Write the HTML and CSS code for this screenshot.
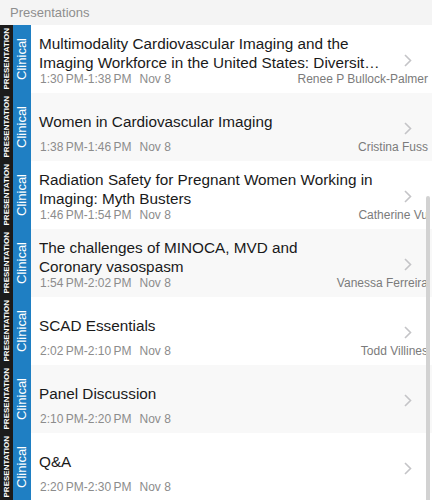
FILE: index.html
```html
<!DOCTYPE html>
<html>
<head>
<meta charset="utf-8">
<link rel="stylesheet" href="styles.css">
</head>
<body>
<div class="screen">
  <div class="section-header">Presentations</div>
  <ul class="list">
    <li class="row">
      <div class="tag-type"><span>PRESENTATION</span></div>
      <div class="tag-track"><span>Clinical</span></div>
      <div class="content">
        <div class="title">Multimodality Cardiovascular Imaging and the Imaging Workforce in the United States: Diversit…</div>
        <svg class="chev" width="8" height="13" viewBox="0 0 8 13"><path d="M1 1l5.5 5.5L1 12" fill="none" stroke="#c4c4c7" stroke-width="1.6"/></svg>
        <div class="meta"><span class="time">1:30&#8201;PM-1:38&#8201;PM<span class="date">Nov 8</span></span><span class="author">Renee P Bullock-Palmer</span></div>
      </div>
    </li>
    <li class="row alt">
      <div class="tag-type"><span>PRESENTATION</span></div>
      <div class="tag-track"><span>Clinical</span></div>
      <div class="content">
        <div class="title">Women in Cardiovascular Imaging</div>
        <svg class="chev" width="8" height="13" viewBox="0 0 8 13"><path d="M1 1l5.5 5.5L1 12" fill="none" stroke="#c4c4c7" stroke-width="1.6"/></svg>
        <div class="meta"><span class="time">1:38&#8201;PM-1:46&#8201;PM<span class="date">Nov 8</span></span><span class="author">Cristina Fuss</span></div>
      </div>
    </li>
    <li class="row">
      <div class="tag-type"><span>PRESENTATION</span></div>
      <div class="tag-track"><span>Clinical</span></div>
      <div class="content">
        <div class="title">Radiation Safety for Pregnant Women Working in Imaging: Myth Busters</div>
        <svg class="chev" width="8" height="13" viewBox="0 0 8 13"><path d="M1 1l5.5 5.5L1 12" fill="none" stroke="#c4c4c7" stroke-width="1.6"/></svg>
        <div class="meta"><span class="time">1:46&#8201;PM-1:54&#8201;PM<span class="date">Nov 8</span></span><span class="author">Catherine Vu</span></div>
      </div>
    </li>
    <li class="row alt">
      <div class="tag-type"><span>PRESENTATION</span></div>
      <div class="tag-track"><span>Clinical</span></div>
      <div class="content">
        <div class="title">The challenges of MINOCA, MVD and<br>Coronary vasospasm</div>
        <svg class="chev" width="8" height="13" viewBox="0 0 8 13"><path d="M1 1l5.5 5.5L1 12" fill="none" stroke="#c4c4c7" stroke-width="1.6"/></svg>
        <div class="meta"><span class="time">1:54&#8201;PM-2:02&#8201;PM<span class="date">Nov 8</span></span><span class="author">Vanessa Ferreira</span></div>
      </div>
    </li>
    <li class="row">
      <div class="tag-type"><span>PRESENTATION</span></div>
      <div class="tag-track"><span>Clinical</span></div>
      <div class="content">
        <div class="title">SCAD Essentials</div>
        <svg class="chev" width="8" height="13" viewBox="0 0 8 13"><path d="M1 1l5.5 5.5L1 12" fill="none" stroke="#c4c4c7" stroke-width="1.6"/></svg>
        <div class="meta"><span class="time">2:02&#8201;PM-2:10&#8201;PM<span class="date">Nov 8</span></span><span class="author">Todd Villines</span></div>
      </div>
    </li>
    <li class="row alt">
      <div class="tag-type"><span>PRESENTATION</span></div>
      <div class="tag-track"><span>Clinical</span></div>
      <div class="content">
        <div class="title">Panel Discussion</div>
        <svg class="chev" width="8" height="13" viewBox="0 0 8 13"><path d="M1 1l5.5 5.5L1 12" fill="none" stroke="#c4c4c7" stroke-width="1.6"/></svg>
        <div class="meta"><span class="time">2:10&#8201;PM-2:20&#8201;PM<span class="date">Nov 8</span></span><span class="author"></span></div>
      </div>
    </li>
    <li class="row">
      <div class="tag-type"><span>PRESENTATION</span></div>
      <div class="tag-track"><span>Clinical</span></div>
      <div class="content">
        <div class="title">Q&amp;A</div>
        <svg class="chev" width="8" height="13" viewBox="0 0 8 13"><path d="M1 1l5.5 5.5L1 12" fill="none" stroke="#c4c4c7" stroke-width="1.6"/></svg>
        <div class="meta"><span class="time">2:20&#8201;PM-2:30&#8201;PM<span class="date">Nov 8</span></span><span class="author"></span></div>
      </div>
    </li>
  </ul>
  <div class="scroll-indicator"></div>
</div>
</body>
</html>
```
FILE: styles.css
```css
* { box-sizing: border-box; }
html, body {
  margin: 0;
  padding: 0;
  background: #ffffff;
}
body {
  font-family: "Liberation Sans", Arial, sans-serif;
  width: 432px;
  height: 500px;
  overflow: hidden;
}
.screen {
  position: relative;
  width: 432px;
  height: 500px;
  overflow: hidden;
}
.section-header {
  height: 25px;
  background: #f4f4f4;
  color: #8e8e8e;
  font-size: 13px;
  line-height: 25px;
  padding-left: 10px;
}
.list {
  list-style: none;
  margin: 0;
  padding: 0;
}
.row {
  display: flex;
  height: 68px;
  background: #ffffff;
}
.row.alt {
  background: #f8f8f8;
}
.tag-type {
  width: 13px;
  flex: none;
  background: #1b1b1b;
  display: flex;
  align-items: center;
  justify-content: center;
}
.tag-type span {
  writing-mode: vertical-rl;
  transform: rotate(180deg);
  color: #ffffff;
  font-weight: bold;
  font-size: 8px;
  line-height: 13px;
  white-space: nowrap;
}
.tag-track {
  width: 18px;
  flex: none;
  background: #1f7fc3;
  display: flex;
  align-items: center;
  justify-content: center;
}
.tag-track span {
  writing-mode: vertical-rl;
  transform: rotate(180deg);
  color: #ffffff;
  font-size: 13px;
  line-height: 18px;
  white-space: nowrap;
}
.content {
  flex: 1;
  min-width: 0;
  display: grid;
  grid-template-columns: 1fr 44px;
  grid-template-rows: 38px 14px;
  padding: 9px 4px 7px 8px;
}
.title {
  grid-column: 1;
  grid-row: 1;
  align-self: center;
  font-size: 15.3px;
  line-height: 19px;
  color: #1a1a1a;
}
.chev {
  grid-column: 2;
  grid-row: 1 / 3;
  align-self: center;
  justify-self: start;
  margin-left: 20px;
}
.meta {
  grid-column: 1 / 3;
  grid-row: 2;
  display: flex;
  justify-content: space-between;
  font-size: 12px;
  line-height: 14px;
}
.time {
  color: #8c8c8c;
  padding-left: 1px;
}
.date {
  margin-left: 8px;
}
.author {
  color: #7b7b7b;
}
.scroll-indicator {
  position: absolute;
  right: 2px;
  top: 196px;
  width: 4px;
  height: 310px;
  border-radius: 2px;
  background: #d2d2d2;
}
```
